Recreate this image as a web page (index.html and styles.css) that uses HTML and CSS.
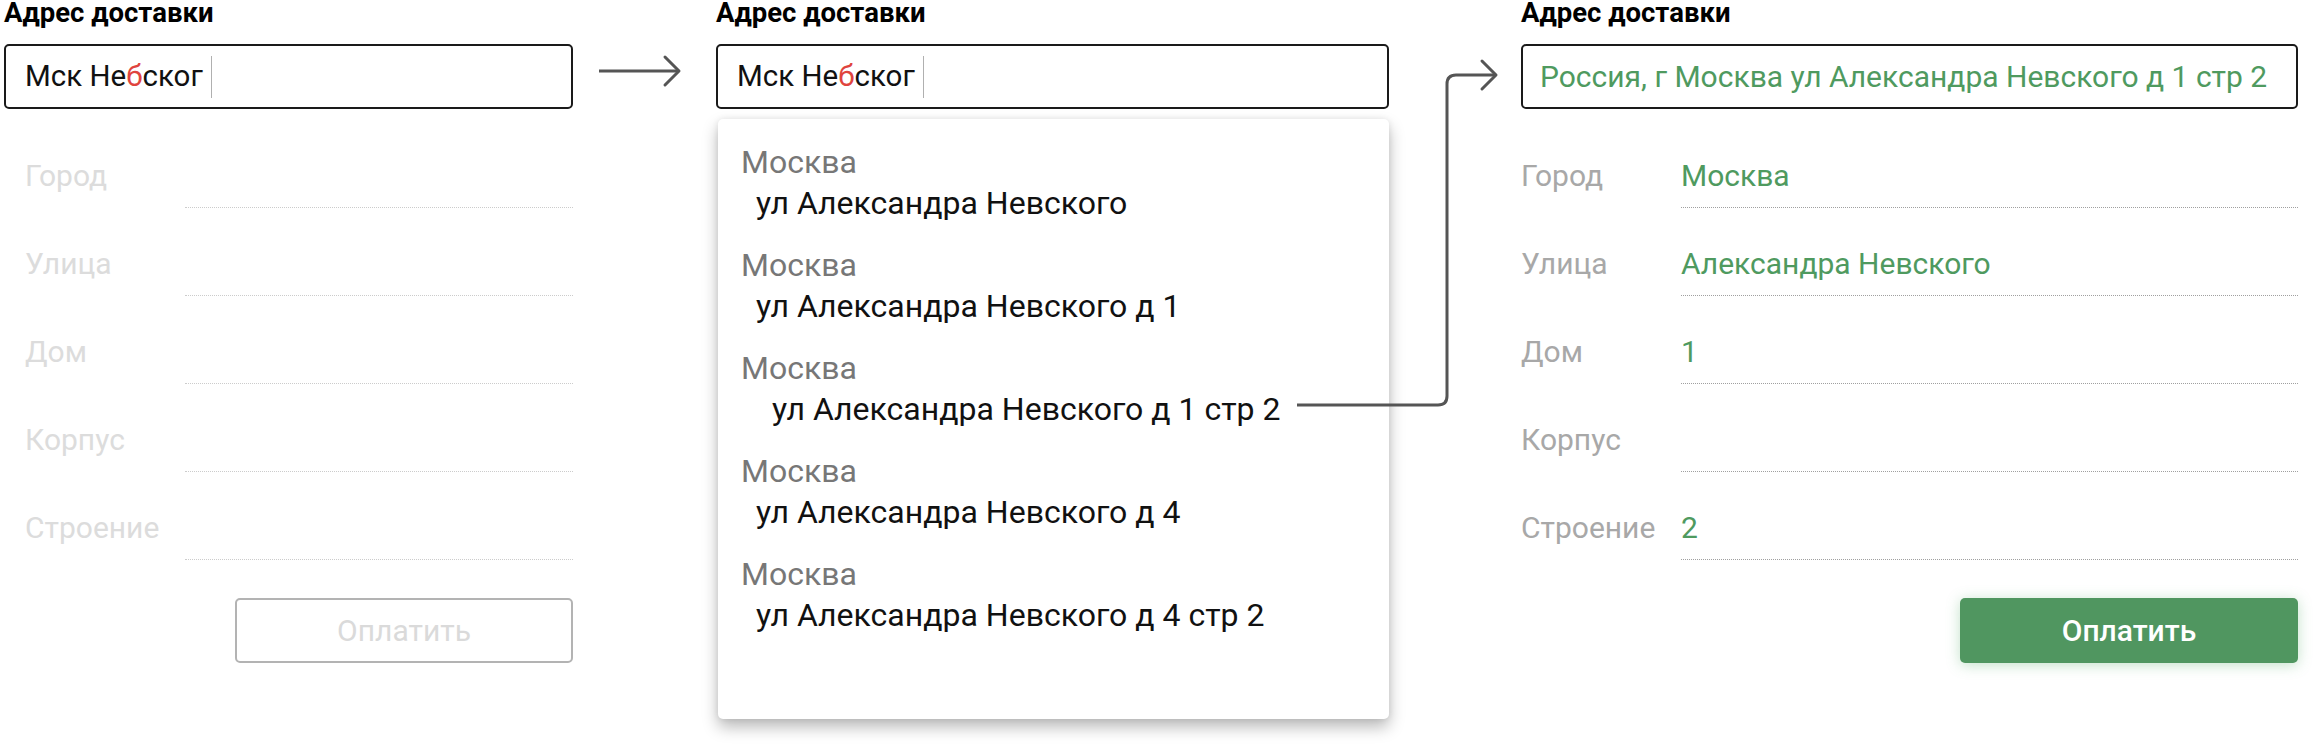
FILE: index.html
```html
<!DOCTYPE html>
<html lang="ru">
<head>
<meta charset="utf-8">
<title>Адрес доставки</title>
<link rel="stylesheet" href="styles.css">
</head>
<body>
<div class="stage">
  <section class="panel panel-a">
    <h2 class="title">Адрес доставки</h2>
    <div class="input"><span class="input-text">Мск Не<span class="typo">б</span>ског</span><i class="caret"></i></div>
    <div class="fields fields-empty">
      <div class="row"><span class="label">Город</span><span class="value"></span></div>
      <div class="row"><span class="label">Улица</span><span class="value"></span></div>
      <div class="row"><span class="label">Дом</span><span class="value"></span></div>
      <div class="row"><span class="label">Корпус</span><span class="value"></span></div>
      <div class="row"><span class="label">Строение</span><span class="value"></span></div>
    </div>
    <div class="actions"><button class="btn btn-disabled" type="button">Оплатить</button></div>
  </section>

  <div class="gap gap-a">
    <svg class="arrow" width="143" height="40" viewBox="0 0 143 40">
      <path d="M26 20 H106" fill="none" stroke="#555" stroke-width="3"/>
      <path d="M92 6 L106 20 L92 34" fill="none" stroke="#555" stroke-width="3" stroke-linecap="round" stroke-linejoin="round"/>
    </svg>
  </div>

  <section class="panel panel-b">
    <h2 class="title">Адрес доставки</h2>
    <div class="input"><span class="input-text">Мск Не<span class="typo">б</span>ског</span><i class="caret"></i></div>
    <ul class="suggest">
      <li class="item"><span class="city">Москва</span><span class="street">ул Александра Невского</span></li>
      <li class="item"><span class="city">Москва</span><span class="street">ул Александра Невского д 1</span></li>
      <li class="item item-active"><span class="city">Москва</span><span class="street">ул Александра Невского д 1 стр 2</span></li>
      <li class="item"><span class="city">Москва</span><span class="street">ул Александра Невского д 4</span></li>
      <li class="item"><span class="city">Москва</span><span class="street">ул Александра Невского д 4 стр 2</span></li>
    </ul>
  </section>

  <div class="gap gap-b"></div>

  <section class="panel panel-c">
    <h2 class="title">Адрес доставки</h2>
    <div class="input input-done"><span class="input-text">Россия, г Москва ул Александра Невского д 1 стр 2</span></div>
    <div class="fields fields-filled">
      <div class="row"><span class="label">Город</span><span class="value">Москва</span></div>
      <div class="row"><span class="label">Улица</span><span class="value">Александра Невского</span></div>
      <div class="row"><span class="label">Дом</span><span class="value">1</span></div>
      <div class="row"><span class="label">Корпус</span><span class="value"></span></div>
      <div class="row"><span class="label">Строение</span><span class="value">2</span></div>
    </div>
    <div class="actions"><button class="btn btn-primary" type="button">Оплатить</button></div>
  </section>

  <svg class="connector" width="2320" height="751" viewBox="0 0 2320 751">
    <path d="M1297 405 H1438 Q1447 405 1447 396 V84 Q1447 75 1456 75 H1495" fill="none" stroke="#555" stroke-width="3"/>
    <path d="M1482 61 L1496 75 L1482 89" fill="none" stroke="#555" stroke-width="3" stroke-linecap="round" stroke-linejoin="round"/>
  </svg>
</div>
</body>
</html>
```

FILE: styles.css
```css
* { box-sizing: border-box; }
html, body { margin: 0; padding: 0; background: #fff; }
body {
  font-family: Roboto, "Noto Sans", "Liberation Sans", sans-serif;
  color: #111;
  width: 2320px;
  height: 751px;
  overflow: hidden;
}
.stage {
  position: relative;
  display: flex;
  align-items: flex-start;
  padding-left: 4px;
  height: 751px;
}
.panel { display: flex; flex-direction: column; }
.panel-a { width: 569px; }
.panel-b { width: 673px; }
.panel-c { width: 777px; }
.gap-a { width: 143px; padding-top: 51px; }
.gap-b { width: 132px; }
.arrow { display: block; }

.title {
  margin: 0 0 18px 0;
  font-size: 27.5px;
  line-height: 26px;
  font-weight: 700;
  color: #000;
}

.input {
  height: 65px;
  border: 2px solid #1a1a1a;
  border-radius: 5px;
  padding-left: 19px;
  display: flex;
  align-items: center;
  font-size: 29.5px;
  line-height: 1.2;
  white-space: nowrap;
  overflow: hidden;
}
.input-text { color: #111; }
.typo { color: #e0443e; }
.caret {
  display: block;
  width: 1px;
  height: 42px;
  background: #b0b0b0;
  margin-left: 8px;
}
.input-done { font-size: 30px; padding-left: 17px; }
.input-done .input-text { color: #4f9a5f; }

.fields { margin-top: 11px; }
.fields-empty { padding-left: 21px; }
.row {
  display: grid;
  grid-template-columns: 160px 1fr;
  height: 88px;
  font-size: 30px;
}
.label, .value {
  padding-top: 32px;
  line-height: 48px;
}
.value { border-bottom: 1px dotted #cccccc; }
.fields-empty .label { color: #dcdcdc; }
.fields-filled .label { color: #a8a8a8; }
.fields-filled .value { color: #4f9a5f; border-bottom-color: #a0a0a0; }

.actions {
  display: flex;
  justify-content: flex-end;
  margin-top: 38px;
}
.btn {
  width: 338px;
  height: 65px;
  border-radius: 5px;
  font-family: inherit;
  font-size: 30px;
  cursor: pointer;
}
.btn-disabled {
  background: #fff;
  border: 2px solid #b3b3b3;
  color: #dadada;
  font-weight: 400;
}
.btn-primary {
  background: #509660;
  border: none;
  color: #fff;
  font-weight: 500;
  box-shadow: 0 2px 14px rgba(80, 170, 100, 0.35);
}

.suggest {
  list-style: none;
  margin: 10px 0 0 2px;
  padding: 23px 0 0 23px;
  height: 600px;
  background: #fff;
  border-radius: 5px;
  box-shadow: 0 8px 16px rgba(0, 0, 0, 0.28), 0 0 6px rgba(0, 0, 0, 0.08);
  display: flex;
  flex-direction: column;
  gap: 21px;
}
.item {
  display: flex;
  flex-direction: column;
  font-size: 32px;
  line-height: 41px;
}
.city { color: #777; }
.street { color: #111; padding-left: 15px; }
.item-active .street { padding-left: 31px; }

.connector {
  position: absolute;
  left: 0;
  top: 0;
  pointer-events: none;
}
```
